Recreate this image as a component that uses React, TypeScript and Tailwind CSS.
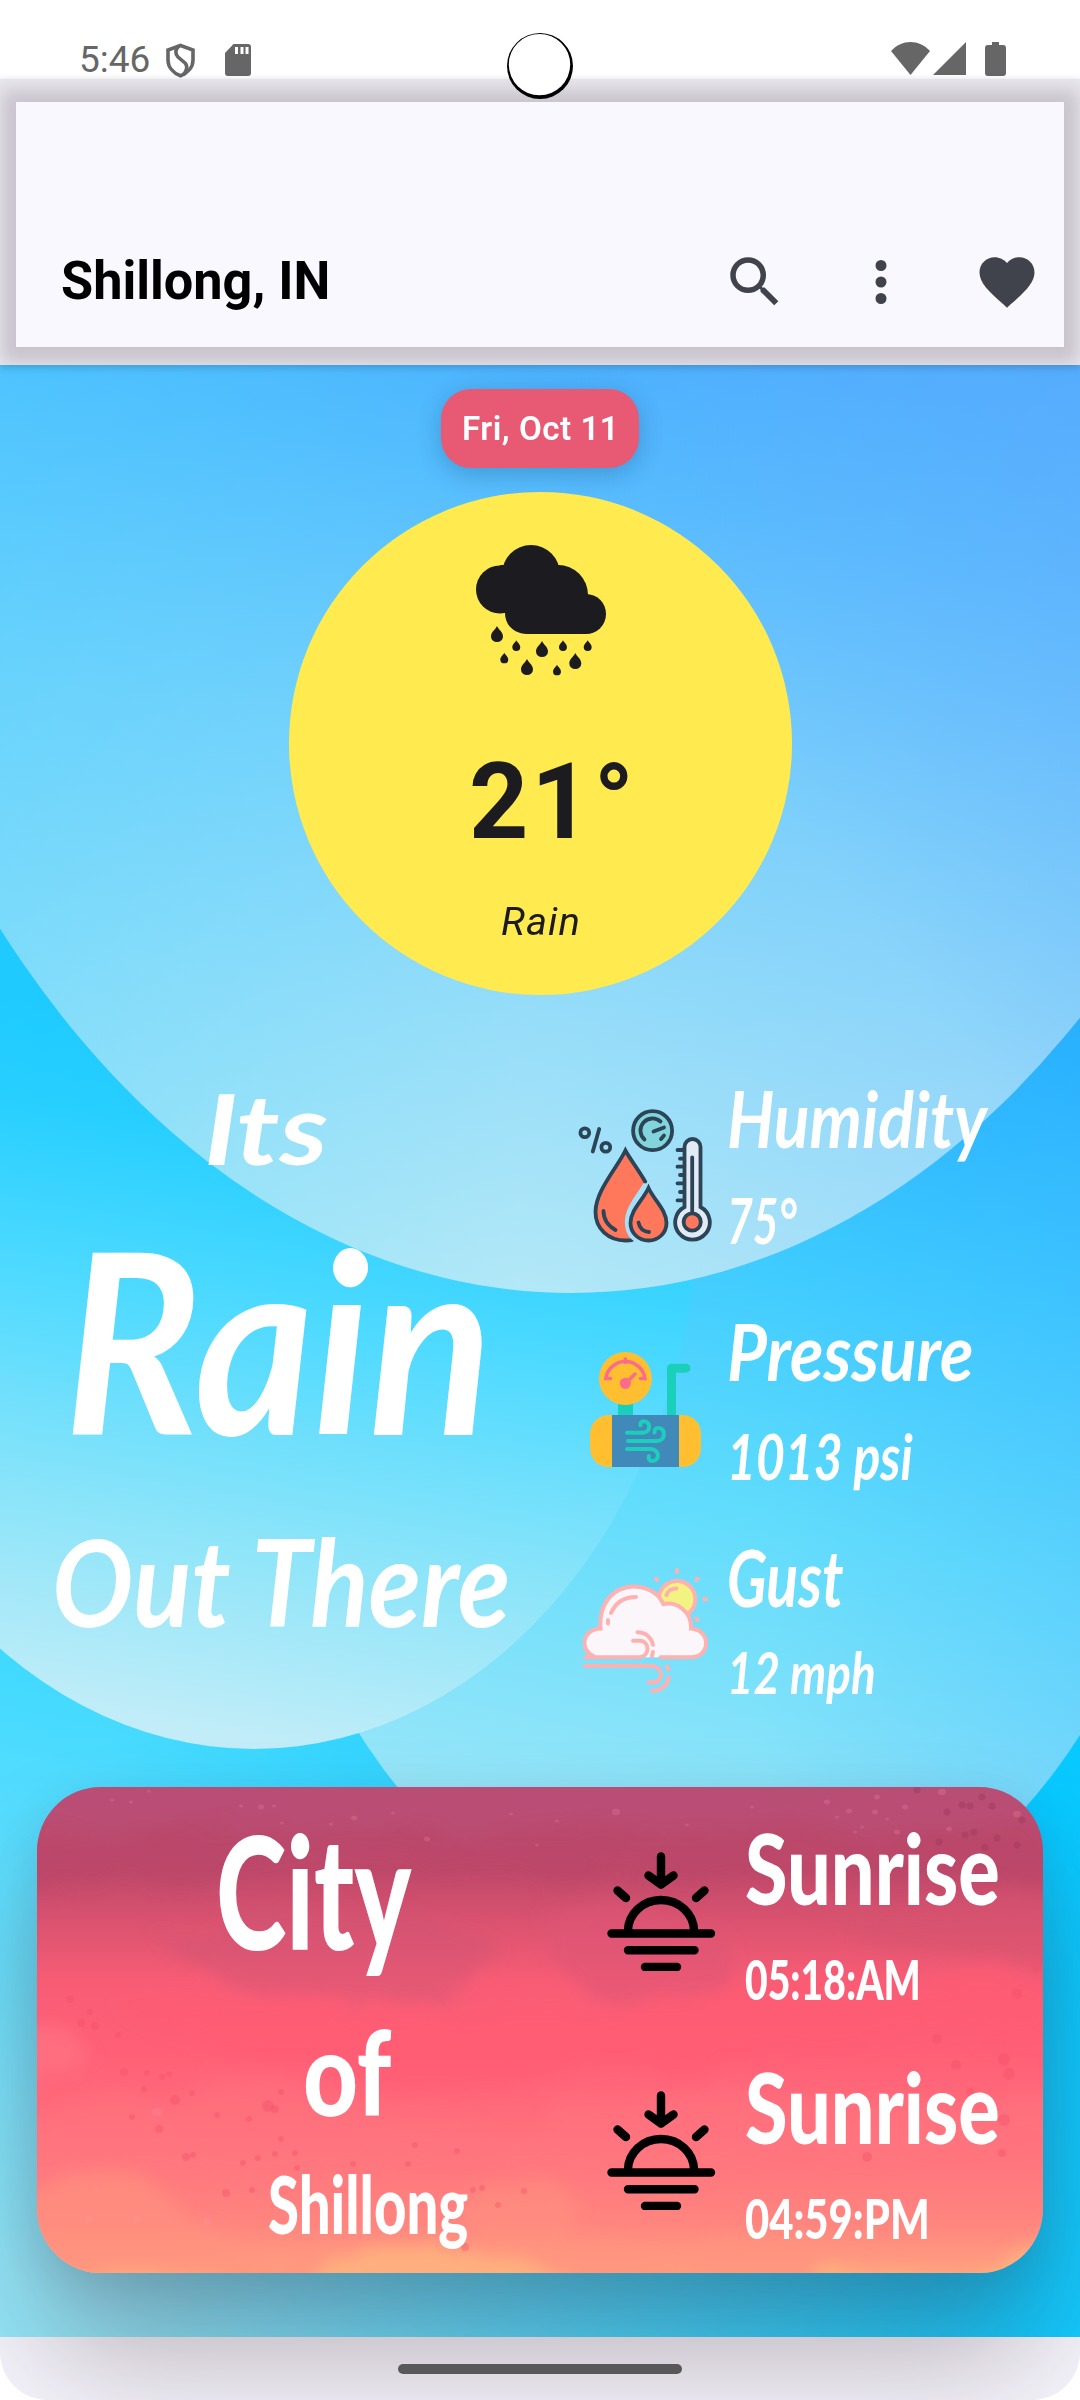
import React, { useLayoutEffect, useRef, useState } from "react";

/** A single line of text squeezed or stretched to an exact width. */
function FitText({ text, width, className }: { text: string; width: number; className: string }) {
  const ref = useRef<HTMLSpanElement>(null);
  const [scale, setScale] = useState(1);
  useLayoutEffect(() => {
    if (ref.current) setScale(width / ref.current.offsetWidth);
  }, [text, width]);
  return (
    <div className={className}>
      <span
        ref={ref}
        className="inline-block origin-left whitespace-pre"
        style={{ transform: `scaleX(${scale})` }}
      >
        {text}
      </span>
    </div>
  );
}

const SCRIPT = "font-['Lato',sans-serif] font-bold italic text-white";
const BRUSH = "font-['Lato',sans-serif] font-black text-white";

function StatusBar() {
  return (
    <div className="flex h-[79px] items-start justify-between bg-white text-[#666666]">
      <div className="flex h-[79px] items-start">
        <FitText
          text="5:46"
          width={71}
          className="ml-[79px] mt-[39px] h-[42px] w-[86px] font-['Roboto',sans-serif] text-[37px] leading-[42px]"
        />
        <svg className="mt-[43px] h-[35px] w-[31px]" viewBox="0 0 31 35" fill="none" stroke="currentColor" strokeWidth="3.6">
          <path d="M15.500 2.500 28 7v10c0 7-5 13-12.500 15.800C8 30 3 24 3 17V7Z" />
          <path d="M14 3c-4 3-4 8-1 11l7 6c3 3 2 8-2 12" />
        </svg>
        <svg className="ml-[29px] mt-[44px] h-[32px] w-[26px]" viewBox="0 0 26 32">
          <path fill="currentColor" d="M8.500 0H23a3 3 0 0 1 3 3v26a3 3 0 0 1-3 3H3a3 3 0 0 1-3-3V9Z" />
          <path stroke="#fff" strokeWidth="3" d="M11.500 3v7M17 3v7M22 3v7" />
        </svg>
      </div>
      <svg className="mr-[74px] mt-[42px] h-[34px] w-[115px]" viewBox="0 0 115 34" fill="currentColor">
        <path d="M0 9C11-3 28-3 39 9L19.500 33Z" />
        <path d="M75 0v33H42Z" />
        <path d="M101 0h7v3h4a3 3 0 0 1 3 3v25a3 3 0 0 1-3 3H97a3 3 0 0 1-3-3V6a3 3 0 0 1 3-3h4Z" />
      </svg>
    </div>
  );
}

function Header() {
  return (
    <div className="relative z-10 h-[286px] overflow-hidden bg-[#e9e7ee] px-4 pb-[18px] pt-[23px] shadow-[0_2px_8px_rgba(0,0,0,0.2)]">
      <div className="flex h-[245px] items-end justify-between bg-[#f9f8ff] shadow-[0_2px_16px_14px_rgba(80,68,80,0.21)]">
        <FitText
          text="Shillong, IN"
          width={269}
          className="mb-[35px] ml-[45px] h-[62px] w-[280px] font-['Roboto',sans-serif] text-[53px] font-bold leading-[62px] text-black"
        />
        <div className="mb-[32px] mr-[24px] flex items-center text-[#40434b]">
          <svg className="h-[66px] w-[66px]" viewBox="0 0 24 24" fill="currentColor">
            <path d="M15.500 14h-.79l-.28-.27A6.471 6.471 0 0 0 16 9.500 6.500 6.500 0 1 0 9.500 16c1.610 0 3.090-.59 4.230-1.570l.27.28v.79l5 4.990L20.490 19l-4.990-5zm-6 0C7.010 14 5 11.990 5 9.500S7.010 5 9.500 5 14 7.010 14 9.500 11.990 14 9.500 14z" />
          </svg>
          <svg className="ml-[60px] h-[66px] w-[66px]" viewBox="0 0 24 24" fill="currentColor">
            <path d="M12 8a2 2 0 1 0 0-4 2 2 0 0 0 0 4Zm0 2a2 2 0 1 0 0 4 2 2 0 0 0 0-4Zm0 6a2 2 0 1 0 0 4 2 2 0 0 0 0-4Z" />
          </svg>
          <svg className="ml-[60px] h-[66px] w-[66px]" viewBox="0 0 24 24" fill="currentColor">
            <path d="m12 21.350-1.450-1.320C5.400 15.360 2 12.280 2 8.500 2 5.420 4.420 3 7.500 3c1.740 0 3.410.81 4.500 2.090C13.090 3.810 14.760 3 16.500 3 19.580 3 22 5.420 22 8.500c0 3.780-3.400 6.860-8.550 11.540L12 21.350z" />
          </svg>
        </div>
      </div>
    </div>
  );
}

/** Sky with three large translucent discs. */
function Sky() {
  return (
    <svg className="absolute inset-0 h-full w-full" viewBox="0 365 1080 1972" preserveAspectRatio="none">
      <defs>
        <linearGradient id="base" gradientUnits="userSpaceOnUse" x1="600" y1="900" x2="340" y2="2337">
          <stop offset="0" stopColor="#10c4ff" />
          <stop offset="0.22" stopColor="#20d4ff" />
          <stop offset="0.5" stopColor="#30d6ff" />
          <stop offset="0.66" stopColor="#50dcff" />
          <stop offset="1" stopColor="#94e8fa" />
        </linearGradient>
        <linearGradient id="baseRight" x1="0" y1="0" x2="1" y2="0">
          <stop offset="0.1" stopColor="#00c4ff" stopOpacity="0" />
          <stop offset="0.5" stopColor="#00c6ff" stopOpacity="0.4" />
          <stop offset="0.95" stopColor="#00c6ff" stopOpacity="0.85" />
        </linearGradient>
        <linearGradient id="low" gradientUnits="userSpaceOnUse" x1="1060" y1="930" x2="830" y2="1960">
          <stop offset="0" stopColor="#16a8ff" />
          <stop offset="0.35" stopColor="#3ccaff" />
          <stop offset="0.6" stopColor="#60dcfc" />
          <stop offset="1" stopColor="#a4e8f8" />
        </linearGradient>
        <linearGradient id="lowRight" gradientUnits="userSpaceOnUse" x1="760" y1="0" x2="1080" y2="0">
          <stop offset="0" stopColor="#4aaeff" stopOpacity="0" />
          <stop offset="1" stopColor="#4aaeff" stopOpacity="0.22" />
        </linearGradient>
        <linearGradient id="left" gradientUnits="userSpaceOnUse" x1="400" y1="1060" x2="280" y2="1749">
          <stop offset="0" stopColor="#1ecaff" />
          <stop offset="0.15" stopColor="#27cfff" />
          <stop offset="0.4" stopColor="#50daff" />
          <stop offset="0.7" stopColor="#8ae4f9" />
          <stop offset="1" stopColor="#c2edf8" />
        </linearGradient>
        <linearGradient id="big" gradientUnits="userSpaceOnUse" x1="740" y1="300" x2="545" y2="1300">
          <stop offset="0" stopColor="#45acfe" />
          <stop offset="0.2" stopColor="#54bbfe" />
          <stop offset="0.5" stopColor="#7bd2fb" />
          <stop offset="0.75" stopColor="#98def9" />
          <stop offset="1" stopColor="#b3e8f7" />
        </linearGradient>
        <linearGradient id="bigLeft" gradientUnits="userSpaceOnUse" x1="0" y1="0" x2="520" y2="0">
          <stop offset="0" stopColor="#3fd4ff" stopOpacity="0.32" />
          <stop offset="1" stopColor="#3fd4ff" stopOpacity="0" />
        </linearGradient>
        <linearGradient id="bigRight" gradientUnits="userSpaceOnUse" x1="700" y1="700" x2="1080" y2="420">
          <stop offset="0" stopColor="#50a4fd" stopOpacity="0" />
          <stop offset="1" stopColor="#50a4fd" stopOpacity="0.4" />
        </linearGradient>
        <linearGradient id="bigHaze" gradientUnits="userSpaceOnUse" x1="560" y1="0" x2="1080" y2="0">
          <stop offset="0" stopColor="#94c4fc" stopOpacity="0" />
          <stop offset="1" stopColor="#94c4fc" stopOpacity="0.26" />
        </linearGradient>
      </defs>
      <rect y="365" width="1080" height="1972" fill="url(#base)" />
      <rect y="365" width="1080" height="1972" fill="url(#baseRight)" />
      <ellipse cx="720" cy="1315" rx="476" ry="642" fill="url(#low)" />
      <ellipse cx="720" cy="1315" rx="476" ry="642" fill="url(#lowRight)" />
      <ellipse cx="254" cy="1182" rx="447" ry="567" fill="url(#left)" />
      <ellipse cx="571.5" cy="170" rx="775" ry="1123" fill="url(#big)" />
      <ellipse cx="571.5" cy="170" rx="775" ry="1123" fill="url(#bigLeft)" />
      <ellipse cx="571.5" cy="170" rx="775" ry="1123" fill="url(#bigHaze)" />
      <ellipse cx="571.5" cy="170" rx="775" ry="1123" fill="url(#bigRight)" />
    </svg>
  );
}

const BIG_DROPS = [[21, 89], [66, 104], [51, 122], [99.3, 116]];
const SMALL_DROPS = [[40.3, 100.6], [28.3, 113], [87, 100.6], [111.7, 100.6], [81, 125]];

function RainCloud() {
  return (
    <svg className="h-[131px] w-[131px]" viewBox="0 0 131 131" fill="#1b1b20">
      <circle cx="24" cy="44.5" r="24" />
      <circle cx="55" cy="29" r="29" />
      <circle cx="82" cy="50" r="30" />
      <circle cx="110" cy="69" r="20" />
      <path d="M24 20h60l26 40v29H51c-13 0-22-9-22-21Z" />
      {BIG_DROPS.map(([x, y]) => (
        <path key={x} transform={`translate(${x} ${y})`} d="M0-8C2-4 6-2 6 2.500A6 5.500 0 0 1-6 2.500C-6-2-2-4 0-8Z" />
      ))}
      {SMALL_DROPS.map(([x, y]) => (
        <path key={x} transform={`translate(${x} ${y}) scale(.66)`} d="M0-8C2-4 6-2 6 2.500A6 5.500 0 0 1-6 2.500C-6-2-2-4 0-8Z" />
      ))}
    </svg>
  );
}

function HumidityIcon() {
  return (
    <svg className="h-[134px] w-[134px]" viewBox="0 0 134 134" fill="none" stroke="#2c4456" strokeWidth="3.8" strokeLinecap="round">
      <circle cx="6.800" cy="23.700" r="4.400" />
      <circle cx="27.800" cy="38.300" r="4.400" />
      <path d="M21.200 20 14.800 42.500" />
      <circle cx="74.600" cy="21.700" r="19.500" fill="#82d5dc" />
      <path d="M66.500 30.500A12 12 0 1 1 82.500 12.500M75.500 22.500l10.500-4M83 30l3-3.500" />
      <path fill="#ff785c" d="M67.300 72.700C60 60 52 50 47.400 41.500 39 59 17.500 82 17.500 103c0 17 13 28.500 30 28.500 3 0 5 0 6.500-.5C44 116 48 101 56 89Z" stroke="none" />
      <path d="M67.300 72.700C60 60 52 50 47.400 41.500 39 59 17.500 82 17.500 103c0 17 13 28.500 30 28.500 3 0 5 0 6.500-.5" />
      <path fill="none" stroke="#a5e0f8" strokeWidth="3.500" d="M66.500 76C58 90 44 104 50 122c1.500 4 3.500 6.500 6 8" />
      <path fill="#ff785c" d="M70.500 79C65 91 52.500 101 52.500 114c0 10 8 17.500 18 17.500S88.500 124 88.500 114C88.500 101 76 91 70.500 79Z" />
      <path d="M25.500 102c0 8 5 15 12 19M60.500 113.500c1 5.500 5 9 10.500 9.500" />
      <path d="M99.500 41h5M102 49.700h3M99.500 57.700h5M102 66h3M99.500 74.300h5M102 83h3M99.500 91.300h5" />
      <path fill="#e0ebf5" d="M106.500 38a7.800 7.800 0 0 1 16 0v60a17.300 17.300 0 1 1-16 0Z" />
      <path d="M114.200 48.500V103" />
      <circle cx="114.200" cy="113" r="8.600" fill="#ff785c" />
    </svg>
  );
}

function PressureIcon() {
  return (
    <svg className="h-[115px] w-[111px]" viewBox="0 0 111 115" fill="none" strokeLinecap="round">
      <path fill="#1ad0bd" d="M28 50h15v14H28z" />
      <path stroke="#1ad0bd" strokeWidth="9" strokeLinejoin="round" strokeLinecap="butt" d="M81.500 64V16.200H96" />
      <circle cx="96" cy="16.200" r="4.400" fill="#1ad0bd" />
      <circle cx="35.400" cy="26.600" r="26.500" fill="#ffbf30" />
      <path stroke="#fb6c8a" strokeWidth="3.500" d="M20.500 26.500h-4.700a19.800 19.800 0 0 1 39.200 0h-4.500M35.400 7v3.500M36 31 45 22" />
      <circle cx="35.400" cy="31.300" r="5.600" fill="#fb6c8a" />
      <path fill="#ffbf30" d="M22 63H19C8 63 0 72 0 82v14c0 11 8 19 19 19h73c11 0 19-8 19-19V82c0-11-8-19-19-19Z" />
      <path fill="#4189b9" d="M22 63h67v52H22z" />
      <path stroke="#1ad0bd" strokeWidth="4" d="M37 80.700h16c8 0 8-11.500 1-11.500-3 0-4 2-3.500 4M38 89h29c9 0 9-13 1.500-13-3 0-4.500 2-4 4.500M37 97h23c10 0 10 12 2.500 12-3.500 0-4.500-2.500-3.500-5" />
    </svg>
  );
}

function GustIcon() {
  return (
    <svg className="h-[126px] w-[125px]" viewBox="0 0 125 126" fill="none" stroke="#ffb1b1" strokeWidth="4" strokeLinecap="round">
      <circle cx="94" cy="31.300" r="18.300" fill="#f3f382" />
      <path d="M94 2v2M73 10.500l1 1.500M114.500 10.500l-1 1.500M121 31.300h2.500M113.500 50.500l1 1.500M83.500 27c1-4 5-6.500 10-6.500" />
      <path
        fill="#fbf6f9"
        stroke="none"
        d="M12 89.300C-3 84-1 61 17.500 60.500 14 12 68 8 80.300 36 94 33 109 44 108 60.500c20 1 20 28.500 0 28.800Z"
      />
      <path d="M11 88.500C-4 82-1 61 17.500 60.500 14 12 68 8 80.300 36 94 33 109 44 108 60.500c20 1 20 28.500 0 28.800H77.500" />
      <path d="M28 45c4-9 12-16 25-16M25 52v3.500" />
      <path d="M2 89.300h55c10-1 10-16 0-16.600h-7M54.500 64.300c8 0 14 5 15.500 12.500M70 84l-1 4" />
      <path d="M2 97.700h66c13 1 13 16.600 2 16.600h-4.500M84 98.500l1.500 3M86 109.500c-2 8-8 13-17 13.500" />
    </svg>
  );
}

function SunIcon() {
  return (
    <svg className="h-[119px] w-[109px]" viewBox="0 0 109 119" fill="none" stroke="#000" strokeWidth="8.400" strokeLinecap="round">
      <path d="M54 4.500V32M41.500 23.500 54 32.500l12.500-9" strokeLinejoin="round" />
      <path d="M10.500 38.500l8.500 7.500M97.500 38.500 89 46" />
      <path d="M21 79a33 31 0 0 1 66 0" />
      <path d="M4.500 81.500h99.500M21 98.200h66.500M38 115h32" />
    </svg>
  );
}

function MetricRow({ icon, label, value, height, iconLeft, iconTop, textTop, gap, labelWidth, valueWidth, small }: {
  icon: React.ReactNode; label: string; value: string; height: string; iconLeft: string; iconTop: string;
  textTop: string; gap: string; labelWidth: number; valueWidth: number; small?: boolean;
}) {
  return (
    <div className={`flex ${height}`}>
      <div className={`w-[187px] ${iconLeft} ${iconTop}`}>{icon}</div>
      <div className={textTop}>
        <FitText text={label} width={labelWidth} className={`${SCRIPT} h-[80px] w-[300px] text-[78px] leading-[80px]`} />
        <FitText
          text={value}
          width={valueWidth}
          className={`${SCRIPT} ${gap} w-[300px] ${small ? "h-[58px] text-[58px] leading-[58px]" : "h-[64px] text-[64px] leading-[64px]"}`}
        />
      </div>
    </div>
  );
}

const DARK_DOTS = [
  [33, 212, 4], [53, 225, 3], [44, 236, 4], [58, 239, 4], [81, 248, 3], [87, 285, 4], [110, 286, 3], [125, 290, 3],
  [107, 302, 3], [132, 287, 3], [138, 313, 5], [155, 306, 3], [95, 330, 3], [122, 342, 4], [180, 328, 3], [212, 332, 3],
  [231, 319, 6], [238, 322, 4], [244, 305, 3], [149, 370, 4], [156, 368, 3], [206, 376, 3], [221, 371, 3], [238, 367, 3],
  [244, 352, 3], [258, 366, 3], [260, 381, 3], [189, 406, 4], [215, 403, 3], [378, 358, 3], [420, 364, 3], [371, 377, 3],
  [316, 377, 3], [436, 403, 3], [445, 401, 3], [461, 418, 3], [487, 404, 3], [428, 460, 4], [900, 252, 5], [980, 207, 5],
  [967, 272, 6], [972, 287, 6], [919, 278, 5], [933, 305, 4], [967, 333, 6], [999, 180, 5], [830, 370, 5], [965, 366, 4],
];
const LIGHT_DOTS = [
  [75, 13, 2], [94, 15, 2], [112, 4, 2], [204, 19, 2], [224, 20, 3], [237, 19, 2], [245, 36, 2], [294, 37, 2], [317, 31, 3],
  [356, 26, 2], [390, 52, 3], [474, 27, 2], [500, 58, 2], [520, 34, 2], [579, 25, 4], [650, 38, 2], [715, 20, 2],
  [790, 15, 3], [800, 30, 2], [812, 24, 3], [825, 40, 2], [838, 25, 3], [850, 32, 2], [860, 45, 3], [868, 20, 3],
  [905, 5, 4], [912, 42, 3], [980, 27, 4], [840, 10, 3], [818, 45, 2], [120, 325, 5], [60, 402, 3], [52, 432, 4], [100, 432, 4], [170, 434, 4],
];

/** Painted sunset clouds behind the city card. */
function SunsetBackdrop() {
  return (
    <svg className="absolute inset-0 h-full w-full" viewBox="0 0 1006 486" preserveAspectRatio="none">
      <defs>
        <linearGradient id="dusk" x1="0" y1="0" x2="0" y2="1">
          <stop offset="0" stopColor="#b94d74" />
          <stop offset="0.17" stopColor="#be486a" />
          <stop offset="0.28" stopColor="#db5370" />
          <stop offset="0.4" stopColor="#f85c75" />
          <stop offset="0.55" stopColor="#ff6077" />
          <stop offset="0.75" stopColor="#ff737d" />
          <stop offset="0.9" stopColor="#ff857f" />
          <stop offset="1" stopColor="#ffa080" />
        </linearGradient>
        <filter id="paint" x="-5%" y="-5%" width="110%" height="110%">
          <feTurbulence type="fractalNoise" baseFrequency="0.010 0.022" numOctaves="4" seed="4" result="n" />
          <feDisplacementMap in="SourceGraphic" in2="n" scale="60" />
          <feGaussianBlur stdDeviation="8" />
        </filter>
      </defs>
      <rect width="1006" height="486" fill="url(#dusk)" />
      <g filter="url(#paint)">
        <path fill="#b94667" fillOpacity=".4" d="M-20 100C150 90 260 60 420 80S640 85 720 80 900 80 1026 110V45H-20Z" />
        <path fill="#ba4f77" fillOpacity=".4" d="M-30-30h1070V35C800 60 600 20 400 40S100 40-30 30Z" />
        <path fill="#cd5273" fillOpacity=".45" d="M120 150c80-40 220-40 320 0s-80 60-130 65-150-20-190-65Z" />
        <path fill="#dd5674" fillOpacity=".6" d="M510 130c100-30 200 10 190 45s-50 45-110 35-90-40-80-80Z" />
        <path fill="#d6536f" fillOpacity=".55" d="M740 110c100 0 200 30 290 10v60c-100 10-180-30-290-70Z" />
        <path fill="#ff5b73" fillOpacity=".6" d="M80 220c160-30 300 30 440 0s220-20 500-30v60c-300 0-500 70-700 40S160 260 80 220Z" />
        <path fill="#ff7f8a" fillOpacity=".45" d="M-20 250c60-10 100 10 50 35s-50 0-50 0Z" />
        <path fill="#ff7b82" fillOpacity=".3" d="M-20 340c150-60 280-40 400-10s250-60 330-30 180 20 320 0v50c-200 10-350 50-550 30S120 410-20 390Z" />
        <path fill="#ff937f" fillOpacity=".6" d="M-20 410c70-30 140-20 160 10s60 60 190 40 170 20 250 10 120-40 200-10 90 50 250 30v80H-20Z" />
        <path fill="#ff957f" fillOpacity=".45" d="M450 405c60-30 90 0 100 30s-60 50-90 30-40-40-10-60Z" />
        <path fill="#ffb380" fillOpacity=".9" d="M20 510c50-40 110-40 170-10s90-45 200-40 150 45 260 45 180-25 250-15 90-40 140-50v100H20Z" />
      </g>
      {DARK_DOTS.map(([x, y, r]) => (
        <ellipse key={`${x}-${y}`} cx={x} cy={y} rx={r} ry={r} fill="#f2506a" fillOpacity=".4" />
      ))}
      {LIGHT_DOTS.map(([x, y, r]) => (
        <ellipse key={`${x}-${y}`} cx={x} cy={y} rx={r} ry={r * 0.8} fill="#ff9ab0" fillOpacity=".2" />
      ))}
      {[[880, 3], [925, 18], [933, 19], [955, 19], [910, 25], [928, 48], [937, 45], [948, 60], [960, 51], [980, 58], [985, 33], [945, 10], [902, 55]].map(([x, y]) => (
        <circle key={x} cx={x} cy={y} r="3.5" fill="#9c3a5c" fillOpacity=".45" />
      ))}
    </svg>
  );
}

function SunTime({ time, width, className }: { time: string; width: number; className: string }) {
  return (
    <div className={`flex ${className}`}>
      <div className="w-[138px] pt-[35px]">
        <SunIcon />
      </div>
      <div>
        <FitText text="Sunrise" width={255} className={`${BRUSH} h-[100px] w-[260px] text-[98px] leading-[100px]`} />
        <FitText text={time} width={width} className={`${BRUSH} mt-[34px] h-[56px] w-[260px] text-[56px] leading-[56px]`} />
      </div>
    </div>
  );
}

function CityCard() {
  return (
    <div className="relative z-10 mx-[37px] h-[486px] rounded-[64px] shadow-[0_84px_124px_rgba(50,25,40,0.3),0_14px_44px_rgba(50,25,40,0.1)]">
      <div className="relative h-full overflow-hidden rounded-[64px]">
        <SunsetBackdrop />
        <div className="relative flex h-full">
          <div className="w-[570px] pt-[28px]">
            <FitText text="City" width={195} className={`${BRUSH} ml-[179px] h-[150px] w-[210px] text-[156px] leading-[150px]`} />
            <FitText text="of" width={88} className={`${BRUSH} ml-[266px] mt-[51px] h-[112px] w-[100px] text-[116px] leading-[112px]`} />
            <FitText text="Shillong" width={200} className={`${BRUSH} ml-[231px] mt-[34px] h-[82px] w-[210px] text-[80px] leading-[82px]`} />
          </div>
          <div>
            <SunTime time="05:18:AM" width={176} className="mt-[30px]" />
            <SunTime time="04:59:PM" width={185} className="mt-[49px]" />
          </div>
        </div>
      </div>
    </div>
  );
}

export default function App() {
  return (
    <div className="relative h-[2400px] w-[1080px] overflow-hidden bg-white font-['Roboto',sans-serif]">
      <div className="h-[2400px] overflow-hidden rounded-b-[48px] bg-[#f5f4fb]">
        <StatusBar />
        <Header />
        <main className="relative flex h-[1972px] flex-col">
          <Sky />
          <div className="relative mx-auto mt-6 flex h-[79px] w-[198px] shrink-0 items-center justify-center rounded-[30px] bg-[#e85a74] shadow-[0_6px_24px_rgba(0,40,80,0.24)]">
            <FitText text="Fri, Oct 11" width={157} className="h-[40px] w-[156px] text-[32.500px] font-semibold leading-[40px] tracking-[0.5px] text-white" />
          </div>
          <div className="relative mx-auto mt-6 flex h-[503px] w-[503px] shrink-0 flex-col items-center rounded-full bg-[#ffeb4f] pt-[53px] text-[#1b1b20]">
            <div className="ml-[2px]">
              <RainCloud />
            </div>
            <FitText text="21°" width={168} className="ml-[24px] mt-[66px] h-[120px] w-[167px] text-[106px] font-bold leading-[120px] tracking-[3px]" />
            <FitText text="Rain" width={80} className="mt-[37px] h-[46px] w-[79px] text-[38.500px] italic leading-[46px] tracking-[1px]" />
          </div>
          <div className="relative mt-[55px] flex h-[737px] shrink-0">
            <div className="w-[540px] pt-[27px]">
              <FitText text="Its" width={124} className={`${SCRIPT} ml-[204px] h-[100px] w-[150px] text-[98px] leading-[100px]`} />
              <FitText text="Rain" width={428} className={`${SCRIPT} ml-[64px] mt-[41px] h-[240px] w-[440px] text-[252px] leading-[240px]`} />
              <FitText text="Out There" width={458} className={`${SCRIPT} ml-[52px] mt-[63px] h-[120px] w-[480px] text-[120px] leading-[120px]`} />
            </div>
            <div className="w-[540px]">
              <MetricRow icon={<HumidityIcon />} label="Humidity" value="75°" height="h-[240px]" iconLeft="pl-[38px]" iconTop="pt-[59px]" textTop="pt-[28px]" gap="mt-[30px]" labelWidth={260} valueWidth={70} />
              <MetricRow icon={<PressureIcon />} label="Pressure" value="1013 psi" height="h-[230px]" iconLeft="pl-[50px]" iconTop="pt-[62px]" textTop="pt-[21px]" gap="mt-[33px]" labelWidth={246} valueWidth={186} />
              <MetricRow icon={<GustIcon />} label="Gust" value="12 mph" height="h-[260px]" iconLeft="pl-[43px]" iconTop="pt-[48px]" textTop="pt-[17px]" gap="mt-[26px]" labelWidth={117} valueWidth={149} small />
            </div>
          </div>
          <CityCard />
        </main>
        <div className="flex h-[63px] items-start justify-center">
          <div className="relative z-20 mt-[27px] h-[10px] w-[284px] rounded-full bg-[#58575a]" />
        </div>
      </div>
      <svg className="absolute left-[506px] top-[32px] z-20 h-[68px] w-[68px]" viewBox="0 0 68 68">
        <circle cx="34" cy="34" r="33" fill="#000" />
        <circle cx="33.500" cy="32.600" r="30.700" fill="#fff" />
      </svg>
    </div>
  );
}
